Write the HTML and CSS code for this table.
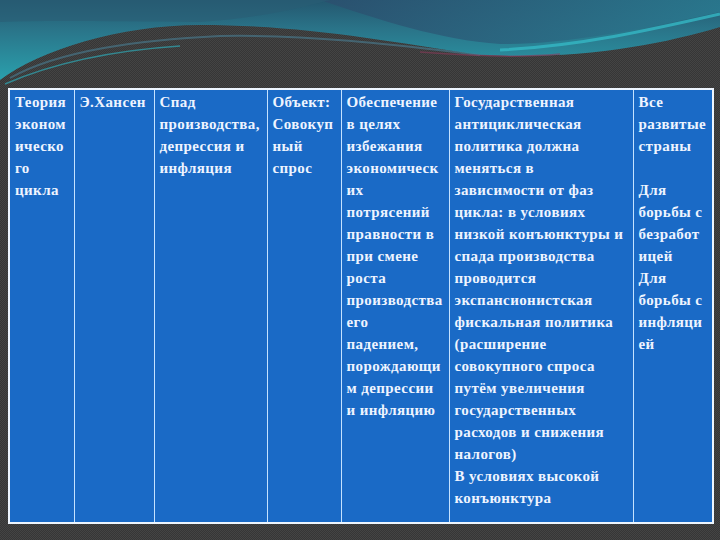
FILE: index.html
```
<!DOCTYPE html>
<html lang="ru">
<head>
<meta charset="utf-8">
<title>Теория экономического цикла</title>
<link rel="stylesheet" href="styles.css">
</head>
<body>
<div class="slide">
  <svg class="deco" width="720" height="88" viewBox="0 0 720 88" aria-hidden="true">
    <defs>
      <linearGradient id="teal" x1="0" y1="0" x2="0" y2="1">
        <stop offset="0" stop-color="#24576f"/>
        <stop offset="0.35" stop-color="#2a7388"/>
        <stop offset="1" stop-color="#2aa0ad"/>
      </linearGradient>
      <linearGradient id="band" x1="0" y1="0" x2="1" y2="0">
        <stop offset="0" stop-color="#2b4f6e"/>
        <stop offset="1" stop-color="#2a7a90"/>
      </linearGradient>
    </defs>
    <path d="M0,0 H720 V27 C660,45 580,60 480,55 C380,40 300,25 200,25 C120,25 40,50 0,80 Z" fill="url(#teal)"/>
    <path d="M320,0 H720 V12 C640,30 560,45 500,44 C440,40 380,20 320,0 Z" fill="url(#band)" opacity="0.85"/>
    <path d="M0,0 H330 C300,8 260,18 200,22 C120,22 60,20 0,22 Z" fill="#2a5d75" opacity="0.6"/>
    <path d="M500,50 C580,46 650,30 720,14" stroke="#35b8c4" stroke-width="3" fill="none" opacity="0.8"/>
    <path d="M10,78 C60,50 140,40 220,36 C320,34 420,48 480,55" stroke="#4a7f95" stroke-width="2" fill="none" opacity="0.6"/>
    <path d="M5,84 C60,60 120,50 180,46" stroke="#2fa6b3" stroke-width="1.5" fill="none" opacity="0.7"/>
    <path d="M420,52 C470,56 520,58 560,54" stroke="#8a3a5a" stroke-width="1.5" fill="none" opacity="0.6"/>
  </svg>
  <table class="grid">
    <colgroup>
      <col class="c1"><col class="c2"><col class="c3"><col class="c4"><col class="c5"><col class="c6"><col class="c7">
    </colgroup>
    <tr>
      <td>Теория<br>эконом<br>ическо<br>го<br>цикла</td>
      <td>Э.Хансен</td>
      <td>Спад<br>производства,<br>депрессия и<br>инфляция</td>
      <td>Объект:<br>Совокуп<br>ный<br>спрос</td>
      <td>Обеспечение<br>в целях<br>избежания<br>экономическ<br>их<br>потрясений<br>правности в<br>при смене<br>роста<br>производства<br>его<br>падением,<br>порождающи<br>м депрессии<br>и инфляцию</td>
      <td>Государственная<br>антициклическая<br>политика должна<br>меняться в<br>зависимости от фаз<br>цикла: в условиях<br>низкой конъюнктуры и<br>спада производства<br>проводится<br>экспансионистская<br>фискальная политика<br>(расширение<br>совокупного спроса<br>путём увеличения<br>государственных<br>расходов и снижения<br>налогов)<br>В условиях высокой<br>конъюнктура</td>
      <td>Все<br>развитые<br>страны<br><br>Для<br>борьбы с<br>безработ<br>ицей<br>Для<br>борьбы с<br>инфляци<br>ей</td>
    </tr>
  </table>
</div>
</body>
</html>
```
FILE: styles.css
```
html, body {
  margin: 0;
  padding: 0;
}
body {
  width: 720px;
  height: 540px;
  overflow: hidden;
  background-color: #3c3c3c;
  background-image: repeating-conic-gradient(#363636 0 25%, #444444 0 50%);
  background-size: 2px 2px;
}
.slide {
  display: flex;
  flex-direction: column;
}
.deco {
  display: block;
}
.grid {
  margin-left: 8px;
  width: 704px;
  height: 436px;
  border-collapse: collapse;
  table-layout: fixed;
  background: #1a6ac6;
  border: 2px solid #eef6ff;
}
.c1 { width: 65px; }
.c2 { width: 80px; }
.c3 { width: 113px; }
.c4 { width: 74px; }
.c5 { width: 108px; }
.c6 { width: 184px; }
.c7 { width: 80px; }
.grid td {
  vertical-align: top;
  border: 1px solid #c4e2ff;
  padding: 1px 1px 0 5px;
  font-family: "Liberation Serif", "Times New Roman", serif;
  font-weight: bold;
  font-size: 15px;
  line-height: 22px;
  letter-spacing: 0.4px;
  color: #eef4ff;
  white-space: nowrap;
  overflow: hidden;
}
```
